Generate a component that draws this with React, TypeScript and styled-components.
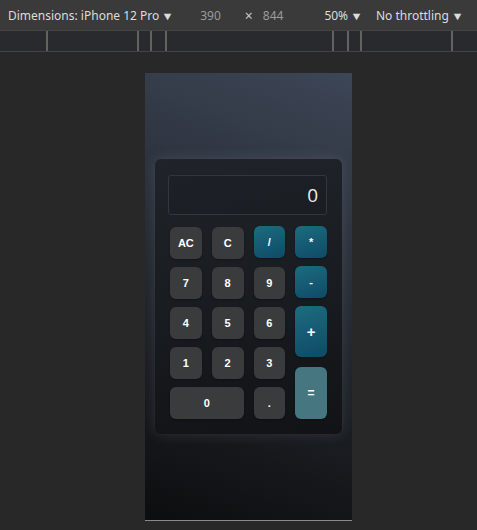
import React, { useState } from "react";
import styled, { createGlobalStyle, css } from "styled-components";

const GlobalStyle = createGlobalStyle`
  html, body {
    margin: 0;
    padding: 0;
    background: #282828;
  }
  * { box-sizing: border-box; }
`;

type Kind = "num" | "op" | "eq";

interface Key {
  label: string;
  kind: Kind;
  wide?: boolean;
}

const upperKeys: Key[] = [
  { label: "AC", kind: "num" },
  { label: "C", kind: "num" },
  { label: "/", kind: "op" },
  { label: "*", kind: "op" },
  { label: "7", kind: "num" },
  { label: "8", kind: "num" },
  { label: "9", kind: "num" },
  { label: "-", kind: "op" },
];

const lowerKeys: Key[] = [
  { label: "4", kind: "num" },
  { label: "5", kind: "num" },
  { label: "6", kind: "num" },
  { label: "1", kind: "num" },
  { label: "2", kind: "num" },
  { label: "3", kind: "num" },
  { label: "0", kind: "num", wide: true },
  { label: ".", kind: "num" },
];

const ticks = [46, 137, 150, 165, 332, 347, 360, 451];

const App: React.FC = () => {
  const [display, setDisplay] = useState("0");

  const press = (label: string) => {
    if (label === "AC") return setDisplay("0");
    if (label === "C") return setDisplay((d) => (d.length > 1 ? d.slice(0, -1) : "0"));
    if (label === "=") {
      try {
        // eslint-disable-next-line no-new-func
        setDisplay(String(Function(`return (${display})`)()));
      } catch {
        setDisplay("0");
      }
      return;
    }
    setDisplay((d) => (d === "0" && label !== "." ? label : d + label));
  };

  return (
    <>
      <GlobalStyle />
      <Toolbar>
        <ToolText>
          Dimensions: iPhone 12 Pro<Caret>▼</Caret>
        </ToolText>
        <SizeText $left={27}>390</SizeText>
        <Times>×</Times>
        <SizeText $left={10}>844</SizeText>
        <ToolText $left={41}>
          50%<Caret>▼</Caret>
        </ToolText>
        <ToolText $left={14}>
          No throttling<Caret>▼</Caret>
        </ToolText>
      </Toolbar>
      <Ruler>
        {ticks.map((x) => (
          <Tick key={x} style={{ left: x }} />
        ))}
      </Ruler>
      <Stage>
        <Device>
          <Calculator>
            <Display>{display}</Display>
            <Keys>
              {[...upperKeys, ...lowerKeys].map((k) => (
                <KeyButton
                  key={k.label}
                  $kind={k.kind}
                  $wide={k.wide}
                  onClick={() => press(k.label)}
                >
                  {k.label}
                </KeyButton>
              ))}
              <SideColumn>
                <KeyButton $kind="op" $size={15} onClick={() => press("+")}>
                  +
                </KeyButton>
                <KeyButton $kind="eq" $size={12} onClick={() => press("=")}>
                  =
                </KeyButton>
              </SideColumn>
            </Keys>
          </Calculator>
        </Device>
      </Stage>
    </>
  );
};

export default App;

/* ── devtools chrome ── */

const Toolbar = styled.div`
  height: 31px;
  display: flex;
  align-items: center;
  padding-left: 8px;
  background: #3a3a3a;
  border-bottom: 1px solid #444;
  font-family: "Noto Sans", "Open Sans", sans-serif;
  font-size: 12px;
  color: #dcdcdc;
  white-space: nowrap;
  overflow: hidden;
`;

const ToolText = styled.span<{ $left?: number }>`
  margin-left: ${(p) => p.$left ?? 0}px;
  display: inline-flex;
  align-items: center;
`;

const Caret = styled.span`
  font-size: 11px;
  margin-left: 3px;
  transform: scaleX(1.15);
`;

const SizeText = styled.span<{ $left: number }>`
  margin-left: ${(p) => p.$left}px;
  color: #9b9b9b;
`;

const Times = styled.span`
  margin-left: 24px;
  color: #c8c8c8;
  font-size: 14px;
`;

const Ruler = styled.div`
  position: relative;
  height: 21px;
  background: #292a2d;
  border-bottom: 1px solid #444;
`;

const Tick = styled.span`
  position: absolute;
  top: 0;
  bottom: 0;
  width: 2px;
  background: #626262;
`;

const Stage = styled.div`
  height: 478px;
  padding: 21px 0 0 145px;
  background: #282828;
`;

const Device = styled.div`
  width: 207px;
  height: 448px;
  display: flex;
  align-items: center;
  justify-content: center;
  background: linear-gradient(200deg, #3d4657 0%, #262b33 45%, #0c0d0e 100%);
  border-bottom: 1px solid #8a8a8a;
  padding-bottom: 1px;
`;

/* ── calculator ── */

const Calculator = styled.div`
  width: 187px;
  height: 275px;
  padding: 16px 15px 15px;
  border-radius: 6px;
  background: linear-gradient(170deg, #20242a 0%, #171a1e 60%, #111315 100%);
  box-shadow:
    0 0 14px rgba(160, 170, 190, 0.18),
    0 0 2px rgba(255, 255, 255, 0.05);
  display: flex;
  flex-direction: column;
`;

const Display = styled.div`
  height: 40px;
  margin: 0 0 12px -2px;
  padding-right: 8px;
  display: flex;
  align-items: center;
  justify-content: flex-end;
  border: 1px solid #33373d;
  border-radius: 3px;
  background: rgba(0, 0, 0, 0.04);
  font-family: "Open Sans", "Noto Sans", sans-serif;
  font-size: 19px;
  color: #ececec;
`;

const Keys = styled.div`
  display: grid;
  grid-template-columns: repeat(4, 1fr);
  grid-auto-rows: 32px;
  column-gap: 10px;
  row-gap: 8px;
`;

const SideColumn = styled.div`
  grid-column: 4;
  grid-row: 3 / span 3;
  display: flex;
  flex-direction: column;
  gap: 9px;

  & > button {
    flex: 1;
  }
`;

const kindStyles = {
  num: css`
    background: #3a3b3d;
  `,
  op: css`
    background: linear-gradient(160deg, #1d6c80 0%, #0e4a66 100%);
    transform: translateY(-1px);
  `,
  eq: css`
    background: #467780;
  `,
};

const KeyButton = styled.button<{ $kind: Kind; $wide?: boolean; $size?: number }>`
  border: none;
  border-radius: 6px;
  padding: 0;
  color: #ffffff;
  font-family: "Liberation Sans", Arial, sans-serif;
  font-size: ${(p) => p.$size ?? 11}px;
  font-weight: 700;
  cursor: pointer;
  box-shadow: 0 1px 2px rgba(0, 0, 0, 0.3);
  ${(p) => kindStyles[p.$kind]}
  ${(p) =>
    p.$wide &&
    css`
      grid-column: span 2;
    `}
`;
